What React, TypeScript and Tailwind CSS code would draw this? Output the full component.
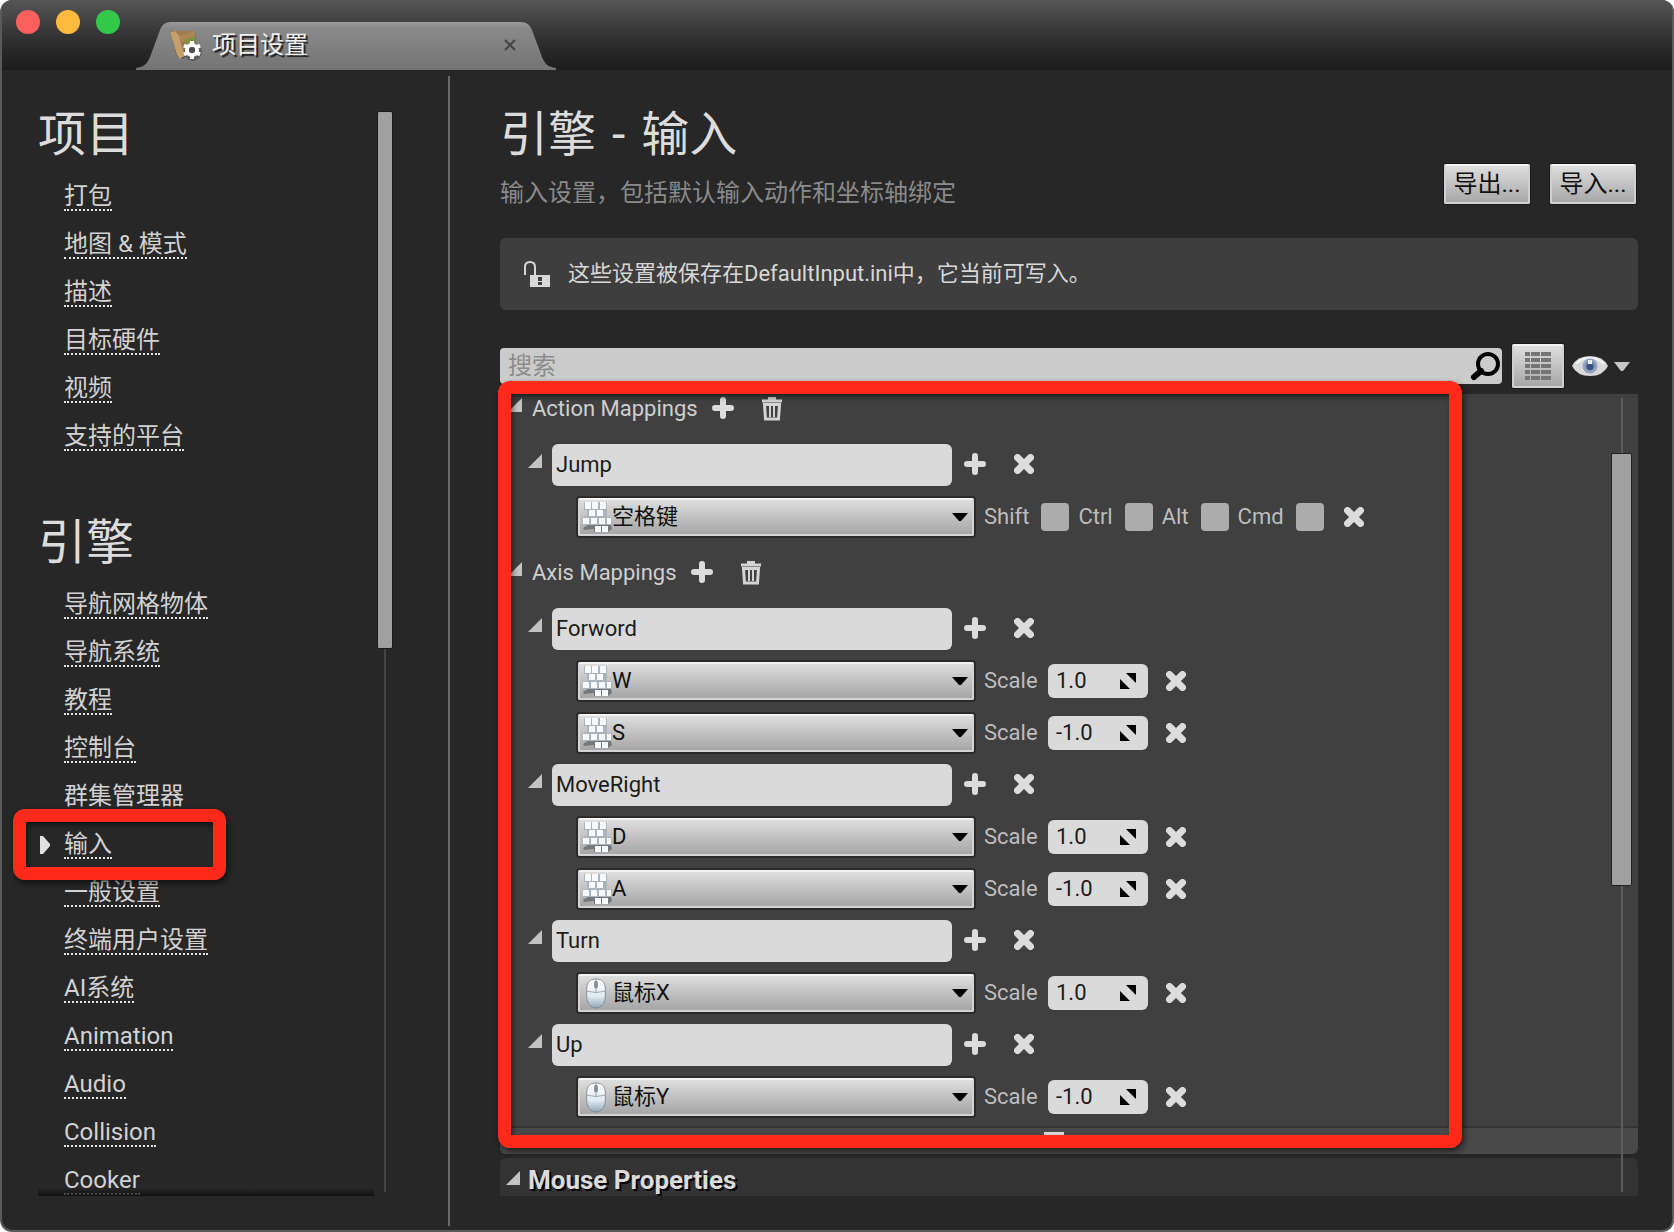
import React from "react";

type Key = { label: string; device: "keyboard" | "mouse"; scale?: string };
type Mapping = { name: string; keys: Key[] };

const projectLinks = ["打包", "地图 & 模式", "描述", "目标硬件", "视频", "支持的平台"];
const engineLinks = [
  "导航网格物体", "导航系统", "教程", "控制台", "群集管理器", "输入", "一般设置",
  "终端用户设置", "AI系统", "Animation", "Audio", "Collision", "Cooker",
];
const activeLink = "输入";

const actionMappings: Mapping[] = [
  { name: "Jump", keys: [{ label: "空格键", device: "keyboard" }] },
];
const axisMappings: Mapping[] = [
  { name: "Forword", keys: [{ label: "W", device: "keyboard", scale: "1.0" }, { label: "S", device: "keyboard", scale: "-1.0" }] },
  { name: "MoveRight", keys: [{ label: "D", device: "keyboard", scale: "1.0" }, { label: "A", device: "keyboard", scale: "-1.0" }] },
  { name: "Turn", keys: [{ label: "鼠标X", device: "mouse", scale: "1.0" }] },
  { name: "Up", keys: [{ label: "鼠标Y", device: "mouse", scale: "-1.0" }] },
];

function Expander() {
  return (
    <svg width="14" height="14" viewBox="0 0 14 14" className="shrink-0" aria-hidden="true">
      <path d="M14 0V14H0Z" fill="#c3c3c3" />
    </svg>
  );
}

function PlusIcon() {
  return (
    <svg width="22" height="22" viewBox="0 0 22 22" aria-hidden="true">
      <path d="M11 3V19M3 11H19" stroke="#dcdcdc" strokeWidth="6" strokeLinecap="round" />
    </svg>
  );
}

function CrossIcon() {
  return (
    <svg width="20" height="20" viewBox="0 0 20 20" aria-hidden="true">
      <path d="M3.5 3.5L16.5 16.5M16.5 3.5L3.5 16.5" stroke="#dcdcdc" strokeWidth="7" strokeLinecap="round" />
    </svg>
  );
}

function TrashIcon() {
  return (
    <svg width="20" height="24" viewBox="0 0 20 24" fill="none" aria-hidden="true">
      <path d="M0 4H20M6 1.5H14" stroke="#d4d4d4" strokeWidth="3" />
      <path d="M2.5 7.5H17.5L16.5 22H3.5Z" stroke="#d4d4d4" strokeWidth="3" />
      <path d="M8 8V20M12 8V20" stroke="#d4d4d4" strokeWidth="2" />
    </svg>
  );
}

function KeyboardIcon() {
  return (
    <svg width="30" height="34" viewBox="0 0 30 34" aria-hidden="true">
      <path d="M2 2H25V17H30V25H1V17H5V10H2Z" fill="#aab4bd" />
      <path d="M1 28L6 25H29L30 29L26 32H12V29L2 30Z" fill="#74787c" />
      <g fill="#f8fbfd">
        <rect x="3" y="2" width="6" height="7" /><rect x="10" y="2" width="6" height="7" /><rect x="18" y="2" width="6" height="7" />
        <rect x="7" y="10" width="6" height="6" /><rect x="15" y="10" width="6" height="6" />
        <rect x="1" y="18" width="6" height="6" /><rect x="9" y="18" width="6" height="6" /><rect x="17" y="18" width="6" height="6" /><rect x="25" y="18" width="4" height="6" />
        <rect x="13" y="26" width="6" height="6" /><rect x="20" y="26" width="6" height="6" />
      </g>
    </svg>
  );
}

function MouseIcon() {
  return (
    <svg width="28" height="34" viewBox="0 0 30 34" aria-hidden="true">
      <defs>
        <linearGradient id="mouseBody" x1="0" y1="0" x2="0" y2="1">
          <stop offset="0" stopColor="#ffffff" />
          <stop offset="0.6" stopColor="#dfeaf2" />
          <stop offset="1" stopColor="#92a6b6" />
        </linearGradient>
      </defs>
      <path d="M5 13C5 5 9 2 15 2S25 5 25 13V20C25 28 21 33 15 33S5 28 5 20Z" fill="url(#mouseBody)" stroke="#7f8a92" strokeWidth="1" />
      <path d="M5 15Q15 18 25 15M15 2V16" stroke="#959fa6" fill="none" />
      <rect x="13" y="4" width="4" height="8" rx="2" fill="#848b91" />
    </svg>
  );
}

function IconButton({ label, className = "", children }: { label: string; className?: string; children: React.ReactNode }) {
  return (
    <button type="button" aria-label={label} className={`flex shrink-0 items-center justify-center ${className}`}>
      {children}
    </button>
  );
}

function NavSection({ title, links }: { title: string; links: string[] }) {
  return (
    <section>
      <h2 className="flex h-[76px] items-center text-5xl font-normal leading-none text-[#dcdcdc]">{title}</h2>
      <ul className="pl-[26px]">
        {links.map((link) => (
          <li key={link} className="relative flex h-12 items-center">
            {link === activeLink && (
              <>
                <svg width="10" height="18" viewBox="0 0 10 18" className="absolute -left-6" aria-hidden="true">
                  <path d="M0 0H3L10 8V10L3 18H0Z" fill="#e0e0e0" />
                </svg>
                <div className="pointer-events-none absolute -left-[51px] -top-3 z-10 h-[71px] w-[213px] rounded-xl border-[13px] border-[#ff2a1a] shadow-[2px_3px_6px_rgba(0,0,0,0.6),inset_2px_3px_5px_rgba(0,0,0,0.5)]" />
              </>
            )}
            <a href="#" className="border-b-2 border-dotted border-[#e4e4e4] text-2xl leading-[26px] text-[#d2d2d2]">{link}</a>
          </li>
        ))}
      </ul>
    </section>
  );
}

function MappingHeader({ title, className }: { title: string; className: string }) {
  return (
    <div className={`flex items-center pl-2 ${className}`}>
      <span className="-mt-2"><Expander /></span>
      <h3 className="ml-2.5 text-[22px] leading-7 text-[#cfcfcf]">{title}</h3>
      <IconButton label={`Add ${title}`} className="-mt-0.5 ml-3.5"><PlusIcon /></IconButton>
      <IconButton label={`Clear ${title}`} className="ml-7"><TrashIcon /></IconButton>
    </div>
  );
}

function KeyRow({ mapping, item }: { mapping: string; item: Key }) {
  const id = `${mapping}-${item.label}`;
  return (
    <div className="flex h-13 items-center pl-[78px]">
      <div className="relative flex h-[38px] w-[396px] items-center rounded-xs border-2 border-[#d4d4d4] border-t-[#f2f2f2] bg-linear-to-b from-[#dedede] to-[#a6a6a6] shadow-[0_0_0_2px_#2a2a2a]">
        <div className="pointer-events-none absolute left-0.5 top-0">
          {item.device === "keyboard" ? <KeyboardIcon /> : <MouseIcon />}
        </div>
        <select aria-label={`${mapping} key`} defaultValue={item.label} className="h-full w-full appearance-none bg-transparent pl-8 text-[22px] leading-7 text-[#111] outline-none">
          <option>{item.label}</option>
        </select>
        <svg width="16" height="8" viewBox="0 0 16 8" className="pointer-events-none absolute right-1" aria-hidden="true">
          <path d="M0 0H16L9 8H7Z" fill="#000" />
        </svg>
      </div>
      {item.scale === undefined ? (
        <div className="ml-2.5 flex items-center gap-[9px]">
          {["Shift", "Ctrl", "Alt", "Cmd"].map((mod) => (
            <label key={mod} className="flex items-center gap-3 text-[22px] leading-7 text-[#bdbdbd]">
              {mod}
              <input type="checkbox" className="size-7 appearance-none rounded bg-[#acacac]" />
            </label>
          ))}
        </div>
      ) : (
        <div className="ml-2.5 flex items-center gap-2">
          <label htmlFor={id} className="w-14 text-[22px] leading-7 text-[#bdbdbd]">Scale</label>
          <div className="flex h-[34px] w-[100px] items-center rounded-md bg-[#dadada] pl-2 pr-3">
            <input id={id} defaultValue={item.scale} className="w-full min-w-0 bg-transparent text-[22px] leading-7 text-[#1c1c1c] outline-none" />
            <svg width="16" height="16" viewBox="0 0 16 16" className="shrink-0" aria-hidden="true">
              <path d="M6 0H16V10ZM0 6L10 16H0Z" fill="#000" />
            </svg>
          </div>
        </div>
      )}
      <IconButton label={`Remove ${item.label}`} className={item.scale === undefined ? "ml-5" : "ml-[18px]"}><CrossIcon /></IconButton>
    </div>
  );
}

function MappingGroup({ mapping }: { mapping: Mapping }) {
  return (
    <div>
      <div className="flex h-13 items-center pl-7">
        <span className="-mt-2"><Expander /></span>
        <input aria-label="Mapping name" defaultValue={mapping.name} className="ml-2.5 h-[42px] w-[400px] rounded-md bg-[#dadada] px-1 pb-0.5 text-[22px] text-[#1c1c1c] outline-none" />
        <IconButton label={`Add key to ${mapping.name}`} className="-mt-0.5 ml-3"><PlusIcon /></IconButton>
        <IconButton label={`Remove ${mapping.name}`} className="-mt-0.5 ml-7"><CrossIcon /></IconButton>
      </div>
      {mapping.keys.map((k) => <KeyRow key={k.label} mapping={mapping.name} item={k} />)}
    </div>
  );
}

function TitleBar() {
  return (
    <header className="flex h-[70px] items-end bg-linear-to-b from-[#565656] via-[#2e2e2e] via-60% to-[#1c1c1c]">
      <div className="mb-9 ml-3.5 flex gap-4">
        <button type="button" aria-label="Close window" className="size-6 rounded-full bg-[#fc605c]" />
        <button type="button" aria-label="Minimise window" className="size-6 rounded-full bg-[#fdbc40]" />
        <button type="button" aria-label="Zoom window" className="size-6 rounded-full bg-[#34c84a]" />
      </div>
      <div className="relative ml-4 flex h-12 w-[420px] items-center pb-0.5 pl-[34px] pr-10">
        <svg viewBox="0 0 420 48" preserveAspectRatio="none" className="absolute inset-0 size-full" aria-hidden="true">
          <defs>
            <linearGradient id="tabFill" x1="0" y1="0" x2="0" y2="1">
              <stop offset="0" stopColor="#9a9a9a" />
              <stop offset="0.12" stopColor="#8a8a8a" />
              <stop offset="1" stopColor="#747474" />
            </linearGradient>
          </defs>
          <path d="M0 48V46C8 45 11 42 14 35L24 8C26 3 29 0 35 0H384C391 0 394 3 396 8L406 35C409 42 412 45 420 46V48Z" fill="url(#tabFill)" />
        </svg>
        <svg width="34" height="34" viewBox="0 0 34 34" className="relative" aria-hidden="true">
          <path d="M0 4L4 3L25 3L26 22L12 31L7 28Z" fill="#5c4a34" />
          <path d="M4 3L25 3L26 21L13 29Z" fill="#a07c4e" />
          <path d="M0 4L5 3L9 8L14 28L10 31L7 27Z" fill="#c69f6e" />
          <path d="M9 8L25 3V10L12 14Z" fill="#ac8756" />
          <path d="M15 11L25 9V15L17 17Z" fill="#7f9440" />
          <circle cx="23" cy="24" r="9" fill="#4a4a4a" opacity="0.6" />
          <g transform="translate(22 22)" stroke="#fff" fill="none">
            <circle r="5" strokeWidth="4" />
            <path d="M0 -9V-6M0 6V9M-8 -4.500L-5 -3M8 -4.500L5 -3M-8 4.500L-5 3M8 4.500L5 3" strokeWidth="4" />
          </g>
          <circle cx="22" cy="22" r="3" fill="#4c4c4c" />
        </svg>
        <span className="relative ml-2 flex-1 text-2xl leading-7 text-[#f0f0f0] [text-shadow:2px_2px_1px_#1a1a1a]">项目设置</span>
        <IconButton label="Close tab" className="relative">
          <svg width="12" height="12" viewBox="0 0 12 12"><path d="M1 1L11 11M11 1L1 11" stroke="#444" strokeWidth="2" /></svg>
        </IconButton>
      </div>
    </header>
  );
}

function ToolButton({ label, children, className }: { label?: string; children: React.ReactNode; className: string }) {
  return (
    <button type="button" aria-label={label} className={`flex items-center justify-center rounded-xs border-2 border-[#d0d0d0] border-t-[#f2f2f2] bg-linear-to-b from-[#dedede] to-[#a8a8a8] text-2xl text-[#111] shadow-[0_0_0_1px_#1a1a1a] ${className}`}>
      {children}
    </button>
  );
}

export default function App() {
  return (
    <div className="flex min-h-screen flex-col overflow-hidden rounded-xl border-2 border-t-0 border-[#5a5a5a] bg-[#272727] font-[Roboto,'Noto_Sans_CJK_SC',sans-serif]">
      <TitleBar />
      <div className="flex flex-1 pb-1 pt-1.5">
        <aside className="flex w-[448px] shrink-0 border-r-2 border-[#6a6a6a] pb-[30px] pl-9 pt-[21px]">
          <nav aria-label="Settings" className="relative flex w-[336px] flex-col gap-11">
            <NavSection title="项目" links={projectLinks} />
            <div className="-mb-[9px]">
              <NavSection title="引擎" links={engineLinks} />
            </div>
            <div className="pointer-events-none absolute inset-x-0 bottom-0 h-2 bg-linear-to-b from-transparent to-[#111]" />
          </nav>
          <div className="mb-1 ml-[3px] mt-3.5 flex w-4 flex-col items-center">
            <div className="h-[538px] w-4 rounded-xs border border-[#1a1a1a] bg-[#a0a0a0]" />
            <div className="w-0.5 flex-1 bg-[#444]" />
          </div>
        </aside>

        <main className="min-w-0 flex-1 pb-[30px] pl-[50px] pr-[34px] pt-[21px]">
          <div className="flex h-[141px] items-start justify-between">
            <div>
              <h1 className="flex h-[76px] items-center gap-4 text-5xl font-normal leading-none text-[#dcdcdc]">
                <span>引擎</span>
                <span>-</span>
                <span>输入</span>
              </h1>
              <p className="pt-1 text-2xl leading-8 text-[#8a8a8a]">输入设置，包括默认输入动作和坐标轴绑定</p>
            </div>
            <div className="mt-[67px] flex gap-5 pr-0.5">
              <ToolButton className="h-10 w-[86px]">导出...</ToolButton>
              <ToolButton className="h-10 w-[86px]">导入...</ToolButton>
            </div>
          </div>

          <div className="flex h-18 items-center rounded-md bg-[#3e3e3e] pl-6 text-[22px] leading-7 text-[#d8d8d8]">
            <svg width="27" height="27" viewBox="0 0 27 27" aria-hidden="true">
              <path d="M1 14V6Q1 1 6 1T11 6V14" fill="none" stroke="#d8d8d8" strokeWidth="2" />
              <path d="M6 14H26V26H6Z" fill="#d8d8d8" />
              <path d="M14 16H18V20H14ZM14 21H18V24H14Z" fill="#3e3e3e" />
            </svg>
            <p className="ml-[17px]">这些设置被保存在DefaultInput.ini中，它当前可写入。</p>
          </div>

          <div className="mt-[34px] flex h-[44px] items-center">
            <div className="flex h-9 flex-1 items-center rounded bg-[#cbcbcb] pl-2 pr-0.5">
              <input type="search" aria-label="搜索" placeholder="搜索" className="min-w-0 flex-1 bg-transparent text-2xl leading-8 text-[#222] outline-none placeholder:text-[#8c8c8c]" />
              <svg width="30" height="30" viewBox="0 0 30 30" fill="none" aria-hidden="true">
                <circle cx="18" cy="13" r="10" stroke="#000" strokeWidth="4" />
                <path d="M11 20L4 26" stroke="#000" strokeWidth="6" strokeLinecap="round" />
              </svg>
            </div>
            <ToolButton label="Property matrix" className="ml-2.5 h-11 w-13">
              <svg width="26" height="28" viewBox="0 0 26 28" aria-hidden="true">
                <path d="M0 2H26M0 8H26M0 14H26M0 20H26M0 26H26" stroke="#757575" strokeWidth="4" strokeDasharray="5 1 9 1 10 0" />
              </svg>
            </ToolButton>
            <button type="button" aria-label="View options" className="ml-2 mr-2 flex items-center gap-1.5">
              <svg width="36" height="22" viewBox="0 0 36 22" aria-hidden="true">
                <path d="M0 11Q5 1 18 1T36 11Q31 21 18 21T0 11Z" fill="#d9d9d9" />
                <path d="M4 9Q9 3 18 3T32 9" fill="none" stroke="#f4f4f4" strokeWidth="2" />
                <circle cx="18" cy="11" r="6" fill="#5f749f" stroke="#93a2c0" strokeWidth="3" />
                <circle cx="18" cy="12" r="3" fill="#36507f" />
                <path d="M16 5H20V9H16Z" fill="#eef2f8" />
              </svg>
              <svg width="16" height="9" viewBox="0 0 16 9" aria-hidden="true"><path d="M0 0H16L9 9H7Z" fill="#c6c6c6" /></svg>
            </button>
          </div>

          <div className="relative mt-1.5">
            <div className="relative">
              <section className="rounded-b-md bg-[#404040]">
                <MappingHeader title="Action Mappings" className="mb-[15px] h-[30px]" />
                {actionMappings.map((m) => <MappingGroup key={m.name} mapping={m} />)}
                <MappingHeader title="Axis Mappings" className="h-15" />
                {axisMappings.map((m) => <MappingGroup key={m.name} mapping={m} />)}
                <div className="mt-[3px] flex h-7 items-start rounded-b-md border-t-2 border-[#343434] bg-[#494949]">
                  <div className="ml-[544px] mt-1 h-1 w-5 bg-[#dadada]" />
                </div>
              </section>
              <div className="pointer-events-none absolute -left-0.5 -top-[13px] bottom-1.5 right-44 z-10 rounded-xl border-[13px] border-[#ff2a1a] shadow-[2px_3px_6px_rgba(0,0,0,0.6),inset_2px_3px_5px_rgba(0,0,0,0.5)]" />
            </div>
            <div className="mt-1 flex h-[38px] items-center rounded-t-md bg-[#333] pl-1.5 pt-1.5">
              <span className="-mt-1"><Expander /></span>
              <h3 className="ml-2 text-[26px] font-bold leading-8 text-[#dcdcdc] [text-shadow:2px_2px_0_#000]">Mouse Properties</h3>
            </div>
            <div className="absolute bottom-1 right-1.5 top-1 flex w-[21px] flex-col items-center">
              <div className="h-[55px] w-0.5 bg-[#5d5d5d]" />
              <div className="h-[433px] w-full rounded-xs border border-[#222] bg-[#a0a0a0]" />
              <div className="w-0.5 flex-1 bg-[#5d5d5d]" />
            </div>
          </div>
        </main>
      </div>
    </div>
  );
}
